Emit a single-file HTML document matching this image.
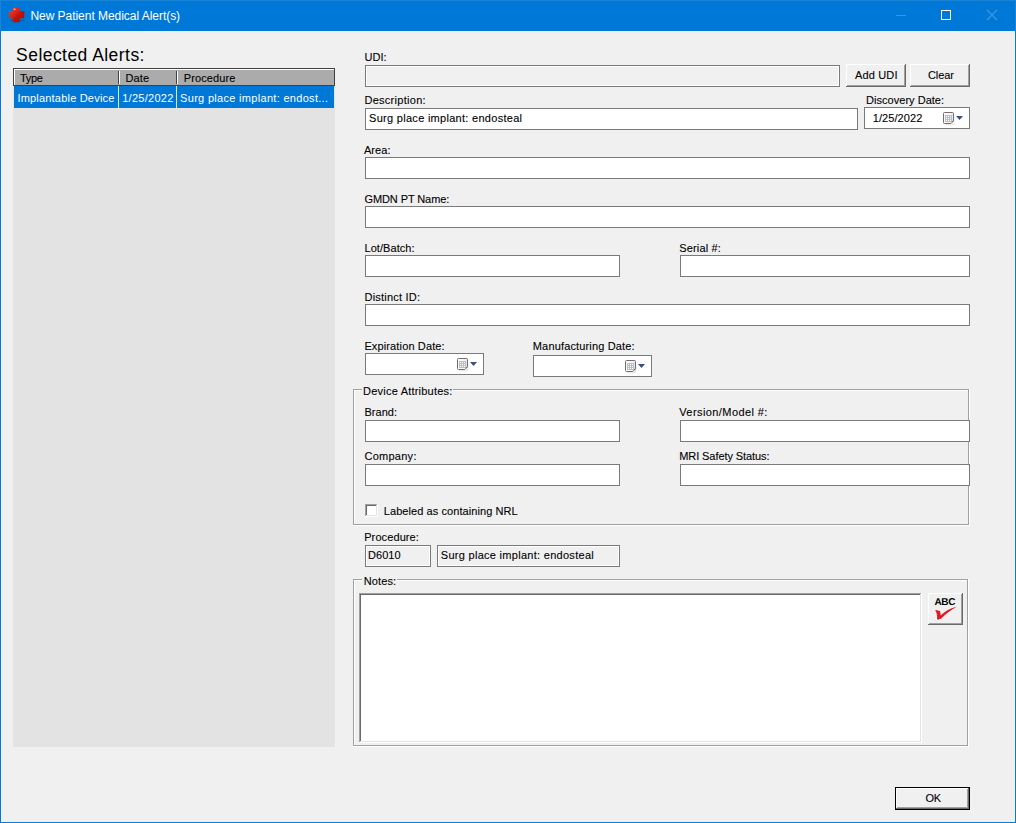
<!DOCTYPE html>
<html><head><meta charset="utf-8"><title>New Patient Medical Alert(s)</title>
<style>
html,body{margin:0;padding:0;}
body{width:1016px;height:823px;overflow:hidden;background:#f0f0f0;position:relative;font-family:"Liberation Sans",sans-serif;}
div,span,svg{position:absolute;box-sizing:border-box;}
.t{white-space:pre;}
.inp{background:#fff;border:1px solid #7a7a7a;}
.dis{background:#f0f0f0;border:1px solid #7a7a7a;box-shadow:inset 0 0 0 1px #fff;}
#win{left:0;top:0;width:1016px;height:823px;border:1px solid #0a7ad7;border-left-color:#0078d7;border-top:none;}
#tb{left:0;top:0;width:1016px;height:31px;background:#0078d7;}
#panel{left:13px;top:68px;width:322px;height:679px;background:#e3e3e3;}
#hdr{left:13px;top:68px;width:322px;height:18px;background:#ababab;border:1px solid #404040;box-shadow:inset 1px 1px 0 0 #fff;}
#row{left:14px;top:86px;width:320px;height:22px;background:#0078d7;}
</style></head><body>
<div id="win"></div>
<div id="tb"></div>
<div class="ln" style="left:0;top:0;width:1016px;height:1px;background:#1883d7"></div>
<div class="ln" style="left:0;top:0;width:1px;height:31px;background:#1883d7"></div>
<div class="ln" style="left:1015px;top:0;width:1px;height:31px;background:#1883d7"></div>

<svg style="left:8px;top:6px" width="18" height="18" viewBox="0 0 18 18">
<defs><linearGradient id="rg" x1="0" y1="0" x2="1" y2="1"><stop offset="0" stop-color="#ee4434"/><stop offset="0.45" stop-color="#d62012"/><stop offset="0.55" stop-color="#c81208"/><stop offset="1" stop-color="#a80600"/></linearGradient></defs>
<ellipse cx="9.2" cy="14.5" rx="7.4" ry="0.9" fill="#1a3a5c" opacity="0.45"/>
<path d="M5.55 1.6H11.0a0.8 0.8 0 0 1 0.8 0.8V5.1H15.5a0.8 0.8 0 0 1 0.8 0.8V11.399999999999999a0.8 0.8 0 0 1 -0.8 0.8H11.8V15.399999999999999a0.8 0.8 0 0 1 -0.8 0.8H5.55a0.8 0.8 0 0 1 -0.8 -0.8V12.2H1.8a0.8 0.8 0 0 1 -0.8 -0.8V5.8999999999999995a0.8 0.8 0 0 1 0.8 -0.8H4.75V2.4000000000000004a0.8 0.8 0 0 1 0.8 -0.8z" fill="url(#rg)"/>
<ellipse cx="6.6" cy="3.2" rx="1.1" ry="0.8" fill="#ffd8d0" opacity="0.8"/>
</svg>
<div class="ln" style="left:896px;top:15px;width:10px;height:1px;background:#3995e1"></div>
<div class="ln" style="left:941px;top:10px;width:10px;height:10px;border:1px solid #fff"></div>
<svg style="left:986px;top:9px" width="12" height="12" viewBox="0 0 12 12"><path d="M1 1l10 10M11 1l-10 10" stroke="#3f98e2" stroke-width="1.1" fill="none"/></svg>
<div id="panel"></div><div id="hdr"></div><div id="row"></div>
<div class="ln" style="left:118px;top:71px;width:1px;height:13px;background:#404040"></div>
<div class="ln" style="left:119px;top:71px;width:1px;height:13px;background:#fff"></div>
<div class="ln" style="left:118px;top:86px;width:1px;height:22px;background:#d9e6f2"></div>
<div class="ln" style="left:176px;top:71px;width:1px;height:13px;background:#404040"></div>
<div class="ln" style="left:177px;top:71px;width:1px;height:13px;background:#fff"></div>
<div class="ln" style="left:176px;top:86px;width:1px;height:22px;background:#d9e6f2"></div>
<div class="dis" style="left:365px;top:65px;width:475px;height:22px;"></div>
<div class="inp" style="left:365px;top:108px;width:493px;height:22px;"></div>
<div class="inp" style="left:864px;top:107px;width:106px;height:22px;"></div><svg class="cal" style="left:943px;top:112px" width="13" height="14" viewBox="0 0 13 14">
<defs><linearGradient id="cg1" x1="0" y1="0" x2="1" y2="0"><stop offset="0" stop-color="#fbfcfe"/><stop offset="0.7" stop-color="#f3f6fb"/><stop offset="1" stop-color="#d3e0f4"/></linearGradient></defs>
<rect x="1.5" y="3.4" width="10" height="10.2" rx="2" fill="#000" opacity="0.08"/>
<path d="M1.5 0.5h8a1 1 0 0 1 1 1v7.3l-2.7 2.7h-6.3a1 1 0 0 1-1-1v-9a1 1 0 0 1 1-1z" fill="url(#cg1)" stroke="#786a68" stroke-width="1"/>
<path d="M8 11.2l0.4-1.9 2.1-0.5z" fill="#e6ecf6"/>
<path d="M8.2 10.2L10.5 8.9" fill="none" stroke="#5f5351" stroke-width="0.9"/>
<rect x="2" y="3" width="7" height="7" fill="#b9bdc6"/>
<g fill="#fff"><rect x="3" y="4" width="1" height="1"/><rect x="5" y="4" width="1" height="1"/><rect x="7" y="4" width="1" height="1"/>
<rect x="3" y="6" width="1" height="1"/><rect x="5" y="6" width="1" height="1"/><rect x="7" y="6" width="1" height="1"/>
<rect x="3" y="8" width="1" height="1"/><rect x="5" y="8" width="1" height="1"/><rect x="7" y="8" width="1" height="1"/></g>
</svg>
<svg class="cal" style="left:956px;top:116px" width="7" height="4" viewBox="0 0 7 4"><path d="M0 0h7l-3.5 4z" fill="#3c517f"/></svg>
<div class="inp" style="left:365px;top:157px;width:605px;height:22px;"></div>
<div class="inp" style="left:365px;top:206px;width:605px;height:22px;"></div>
<div class="inp" style="left:365px;top:255px;width:255px;height:22px;"></div>
<div class="inp" style="left:680px;top:255px;width:290px;height:22px;"></div>
<div class="inp" style="left:365px;top:304px;width:605px;height:22px;"></div>
<div class="inp" style="left:365px;top:353px;width:119px;height:22px;"></div><svg class="cal" style="left:457px;top:358px" width="13" height="14" viewBox="0 0 13 14">
<defs><linearGradient id="cg2" x1="0" y1="0" x2="1" y2="0"><stop offset="0" stop-color="#fbfcfe"/><stop offset="0.7" stop-color="#f3f6fb"/><stop offset="1" stop-color="#d3e0f4"/></linearGradient></defs>
<rect x="1.5" y="3.4" width="10" height="10.2" rx="2" fill="#000" opacity="0.08"/>
<path d="M1.5 0.5h8a1 1 0 0 1 1 1v7.3l-2.7 2.7h-6.3a1 1 0 0 1-1-1v-9a1 1 0 0 1 1-1z" fill="url(#cg2)" stroke="#786a68" stroke-width="1"/>
<path d="M8 11.2l0.4-1.9 2.1-0.5z" fill="#e6ecf6"/>
<path d="M8.2 10.2L10.5 8.9" fill="none" stroke="#5f5351" stroke-width="0.9"/>
<rect x="2" y="3" width="7" height="7" fill="#b9bdc6"/>
<g fill="#fff"><rect x="3" y="4" width="1" height="1"/><rect x="5" y="4" width="1" height="1"/><rect x="7" y="4" width="1" height="1"/>
<rect x="3" y="6" width="1" height="1"/><rect x="5" y="6" width="1" height="1"/><rect x="7" y="6" width="1" height="1"/>
<rect x="3" y="8" width="1" height="1"/><rect x="5" y="8" width="1" height="1"/><rect x="7" y="8" width="1" height="1"/></g>
</svg>
<svg class="cal" style="left:470px;top:362px" width="7" height="4" viewBox="0 0 7 4"><path d="M0 0h7l-3.5 4z" fill="#3c517f"/></svg>
<div class="inp" style="left:533px;top:355px;width:119px;height:22px;"></div><svg class="cal" style="left:625px;top:360px" width="13" height="14" viewBox="0 0 13 14">
<defs><linearGradient id="cg3" x1="0" y1="0" x2="1" y2="0"><stop offset="0" stop-color="#fbfcfe"/><stop offset="0.7" stop-color="#f3f6fb"/><stop offset="1" stop-color="#d3e0f4"/></linearGradient></defs>
<rect x="1.5" y="3.4" width="10" height="10.2" rx="2" fill="#000" opacity="0.08"/>
<path d="M1.5 0.5h8a1 1 0 0 1 1 1v7.3l-2.7 2.7h-6.3a1 1 0 0 1-1-1v-9a1 1 0 0 1 1-1z" fill="url(#cg3)" stroke="#786a68" stroke-width="1"/>
<path d="M8 11.2l0.4-1.9 2.1-0.5z" fill="#e6ecf6"/>
<path d="M8.2 10.2L10.5 8.9" fill="none" stroke="#5f5351" stroke-width="0.9"/>
<rect x="2" y="3" width="7" height="7" fill="#b9bdc6"/>
<g fill="#fff"><rect x="3" y="4" width="1" height="1"/><rect x="5" y="4" width="1" height="1"/><rect x="7" y="4" width="1" height="1"/>
<rect x="3" y="6" width="1" height="1"/><rect x="5" y="6" width="1" height="1"/><rect x="7" y="6" width="1" height="1"/>
<rect x="3" y="8" width="1" height="1"/><rect x="5" y="8" width="1" height="1"/><rect x="7" y="8" width="1" height="1"/></g>
</svg>
<svg class="cal" style="left:638px;top:364px" width="7" height="4" viewBox="0 0 7 4"><path d="M0 0h7l-3.5 4z" fill="#3c517f"/></svg>
<div class="ln" style="left:353px;top:389px;width:9px;height:1px;background:#a0a0a0"></div><div class="ln" style="left:354px;top:390px;width:8px;height:1px;background:#fff"></div><div class="ln" style="left:453px;top:389px;width:516px;height:1px;background:#a0a0a0"></div><div class="ln" style="left:453px;top:390px;width:515px;height:1px;background:#fff"></div><div class="ln" style="left:353px;top:389px;width:1px;height:136px;background:#a0a0a0"></div><div class="ln" style="left:354px;top:390px;width:1px;height:134px;background:#fff"></div><div class="ln" style="left:968px;top:389px;width:1px;height:136px;background:#a0a0a0"></div><div class="ln" style="left:969px;top:389px;width:1px;height:137px;background:#fff"></div><div class="ln" style="left:353px;top:524px;width:616px;height:1px;background:#a0a0a0"></div><div class="ln" style="left:353px;top:525px;width:617px;height:1px;background:#fff"></div>
<div class="inp" style="left:365px;top:420px;width:255px;height:22px;"></div>
<div class="inp" style="left:680px;top:420px;width:290px;height:22px;"></div>
<div class="inp" style="left:365px;top:464px;width:255px;height:22px;"></div>
<div class="inp" style="left:680px;top:464px;width:290px;height:22px;"></div>
<div class="ln" style="left:365px;top:504px;width:13px;height:13px;background:#fff"></div>
<div class="ln" style="left:365px;top:504px;width:12px;height:12px;background:#a0a0a0"></div>
<div class="ln" style="left:366px;top:505px;width:11px;height:11px;background:#e3e3e3"></div>
<div class="ln" style="left:366px;top:505px;width:10px;height:10px;background:#696969"></div>
<div class="ln" style="left:367px;top:506px;width:9px;height:9px;background:#fff"></div>
<div class="dis" style="left:365px;top:545px;width:66px;height:22px;"></div>
<div class="dis" style="left:437px;top:545px;width:183px;height:22px;"></div>
<div class="ln" style="left:353px;top:579px;width:9px;height:1px;background:#a0a0a0"></div><div class="ln" style="left:354px;top:580px;width:8px;height:1px;background:#fff"></div><div class="ln" style="left:397px;top:579px;width:571px;height:1px;background:#a0a0a0"></div><div class="ln" style="left:397px;top:580px;width:570px;height:1px;background:#fff"></div><div class="ln" style="left:353px;top:579px;width:1px;height:167px;background:#a0a0a0"></div><div class="ln" style="left:354px;top:580px;width:1px;height:165px;background:#fff"></div><div class="ln" style="left:967px;top:579px;width:1px;height:167px;background:#a0a0a0"></div><div class="ln" style="left:968px;top:579px;width:1px;height:168px;background:#fff"></div><div class="ln" style="left:353px;top:745px;width:615px;height:1px;background:#a0a0a0"></div><div class="ln" style="left:353px;top:746px;width:616px;height:1px;background:#fff"></div>
<div class="ln" style="left:359px;top:593px;width:563px;height:150px;background:#fff"></div>
<div class="ln" style="left:359px;top:593px;width:562px;height:149px;background:#a0a0a0"></div>
<div class="ln" style="left:360px;top:594px;width:561px;height:148px;background:#e3e3e3"></div>
<div class="ln" style="left:360px;top:594px;width:560px;height:147px;background:#696969"></div>
<div class="ln" style="left:361px;top:595px;width:559px;height:146px;background:#fff"></div>
<div class="ln" style="left:846px;top:64px;width:60px;height:23px;background:#696969"></div><div class="ln" style="left:846px;top:64px;width:59px;height:22px;background:#fff"></div><div class="ln" style="left:847px;top:65px;width:58px;height:21px;background:#a0a0a0"></div><div class="ln" style="left:847px;top:65px;width:57px;height:20px;background:#f0f0f0"></div>
<div class="ln" style="left:910px;top:64px;width:60px;height:23px;background:#696969"></div><div class="ln" style="left:910px;top:64px;width:59px;height:22px;background:#fff"></div><div class="ln" style="left:911px;top:65px;width:58px;height:21px;background:#a0a0a0"></div><div class="ln" style="left:911px;top:65px;width:57px;height:20px;background:#f0f0f0"></div>
<div class="ln" style="left:928px;top:593px;width:35px;height:32px;background:#696969"></div><div class="ln" style="left:928px;top:593px;width:34px;height:31px;background:#fff"></div><div class="ln" style="left:929px;top:594px;width:33px;height:30px;background:#a0a0a0"></div><div class="ln" style="left:929px;top:594px;width:32px;height:29px;background:#f0f0f0"></div>
<div class="ln" style="left:895px;top:787px;width:75px;height:23px;background:#000"></div><div class="ln" style="left:896px;top:788px;width:73px;height:21px;background:#696969"></div><div class="ln" style="left:896px;top:788px;width:72px;height:20px;background:#fff"></div><div class="ln" style="left:897px;top:789px;width:71px;height:19px;background:#a0a0a0"></div><div class="ln" style="left:897px;top:789px;width:70px;height:18px;background:#f0f0f0"></div>
<svg style="left:934px;top:605px" width="25" height="16" viewBox="0 0 25 16">
<path d="M1.7 5.1 L6.0 6.0 C6.3 7.6 6.5 9.0 6.9 10.4 C10.5 6.6 15.5 3.5 22.9 1.7 C17 4.6 11 9.2 7.0 13.8 L3.6 14.2 C3.8 11 3.2 7.8 1.7 5.1Z" fill="#e9141d"/>
<path d="M1.7 5.1 C3.2 7.8 3.8 11 3.6 14.2 L5 13.9" fill="none" stroke="#a80c14" stroke-width="0.7"/>
</svg>
<span class="t" id="title" style="left:30.40px;top:7.84px;font-size:12px;line-height:16px;color:#fff;letter-spacing:-0.037px;">New Patient Medical Alert(s)</span>
<span class="t" id="sel" style="left:16.10px;top:43.64px;font-size:17.5px;line-height:23px;color:#000;letter-spacing:0.450px;">Selected Alerts:</span>
<span class="t" id="hType" style="left:19.90px;top:71.19px;font-size:11px;line-height:14px;color:#000;letter-spacing:-0.270px;-webkit-text-stroke:0.1px #000;">Type</span>
<span class="t" id="hDate" style="left:125.50px;top:71.19px;font-size:11px;line-height:14px;color:#000;letter-spacing:0.100px;-webkit-text-stroke:0.1px #000;">Date</span>
<span class="t" id="hProc" style="left:183.80px;top:71.19px;font-size:11px;line-height:14px;color:#000;letter-spacing:0.089px;-webkit-text-stroke:0.1px #000;">Procedure</span>
<span class="t" id="rType" style="left:17.40px;top:90.79px;font-size:11px;line-height:14px;color:#fff;letter-spacing:0.200px;">Implantable Device</span>
<span class="t" id="rDate" style="left:122.20px;top:90.79px;font-size:11px;line-height:14px;color:#fff;letter-spacing:0.275px;">1/25/2022</span>
<span class="t" id="rProc" style="left:180.10px;top:90.79px;font-size:11px;line-height:14px;color:#fff;letter-spacing:0.304px;">Surg place implant: endost...</span>
<span class="t" id="udi" style="left:364.40px;top:50.19px;font-size:11px;line-height:14px;color:#000;letter-spacing:0.067px;-webkit-text-stroke:0.1px #000;">UDI:</span>
<span class="t" id="desc" style="left:364.40px;top:93.19px;font-size:11px;line-height:14px;color:#000;letter-spacing:0.291px;-webkit-text-stroke:0.1px #000;">Description:</span>
<span class="t" id="descv" style="left:369.10px;top:110.69px;font-size:11px;line-height:14px;color:#000;letter-spacing:0.286px;-webkit-text-stroke:0.1px #000;">Surg place implant: endosteal</span>
<span class="t" id="disc" style="left:866.10px;top:92.69px;font-size:11px;line-height:14px;color:#000;letter-spacing:0.023px;-webkit-text-stroke:0.1px #000;">Discovery Date:</span>
<span class="t" id="discv" style="left:872.70px;top:110.69px;font-size:11px;line-height:14px;color:#000;letter-spacing:0.080px;-webkit-text-stroke:0.1px #000;">1/25/2022</span>
<span class="t" id="area" style="left:363.90px;top:142.89px;font-size:11px;line-height:14px;color:#000;letter-spacing:0.100px;-webkit-text-stroke:0.1px #000;">Area:</span>
<span class="t" id="gmdn" style="left:364.50px;top:191.99px;font-size:11px;line-height:14px;color:#000;letter-spacing:-0.100px;-webkit-text-stroke:0.1px #000;">GMDN PT Name:</span>
<span class="t" id="lot" style="left:364.50px;top:241.19px;font-size:11px;line-height:14px;color:#000;letter-spacing:0.055px;-webkit-text-stroke:0.1px #000;">Lot/Batch:</span>
<span class="t" id="serial" style="left:679.20px;top:241.19px;font-size:11px;line-height:14px;color:#000;letter-spacing:0.162px;-webkit-text-stroke:0.1px #000;">Serial #:</span>
<span class="t" id="dist" style="left:364.50px;top:289.89px;font-size:11px;line-height:14px;color:#000;letter-spacing:0.218px;-webkit-text-stroke:0.1px #000;">Distinct ID:</span>
<span class="t" id="exp" style="left:364.40px;top:338.99px;font-size:11px;line-height:14px;color:#000;letter-spacing:0.134px;-webkit-text-stroke:0.1px #000;">Expiration Date:</span>
<span class="t" id="manu" style="left:532.80px;top:339.19px;font-size:11px;line-height:14px;color:#000;letter-spacing:0.155px;-webkit-text-stroke:0.1px #000;">Manufacturing Date:</span>
<span class="t" id="dev" style="left:363.10px;top:383.99px;font-size:11px;line-height:14px;color:#000;letter-spacing:0.212px;-webkit-text-stroke:0.1px #000;">Device Attributes:</span>
<span class="t" id="brand" style="left:364.50px;top:404.99px;font-size:11px;line-height:14px;color:#000;letter-spacing:0.020px;-webkit-text-stroke:0.1px #000;">Brand:</span>
<span class="t" id="ver" style="left:679.20px;top:405.09px;font-size:11px;line-height:14px;color:#000;letter-spacing:0.420px;-webkit-text-stroke:0.1px #000;">Version/Model #:</span>
<span class="t" id="comp" style="left:364.50px;top:449.19px;font-size:11px;line-height:14px;color:#000;letter-spacing:0.257px;-webkit-text-stroke:0.1px #000;">Company:</span>
<span class="t" id="mri" style="left:679.20px;top:449.49px;font-size:11px;line-height:14px;color:#000;letter-spacing:-0.077px;-webkit-text-stroke:0.1px #000;">MRI Safety Status:</span>
<span class="t" id="nrl" style="left:383.80px;top:504.09px;font-size:11px;line-height:14px;color:#000;letter-spacing:0.074px;-webkit-text-stroke:0.1px #000;">Labeled as containing NRL</span>
<span class="t" id="proc" style="left:364.20px;top:529.99px;font-size:11px;line-height:14px;color:#000;letter-spacing:0.100px;-webkit-text-stroke:0.1px #000;">Procedure:</span>
<span class="t" id="d6010" style="left:368.10px;top:548.09px;font-size:11px;line-height:14px;color:#000;letter-spacing:0.000px;-webkit-text-stroke:0.1px #000;">D6010</span>
<span class="t" id="procv" style="left:440.80px;top:548.09px;font-size:11px;line-height:14px;color:#000;letter-spacing:0.286px;-webkit-text-stroke:0.1px #000;">Surg place implant: endosteal</span>
<span class="t" id="notes" style="left:363.80px;top:574.19px;font-size:11px;line-height:14px;color:#000;letter-spacing:0.100px;-webkit-text-stroke:0.1px #000;">Notes:</span>
<span class="t" id="addudi" style="left:854.90px;top:67.99px;font-size:11px;line-height:14px;color:#000;letter-spacing:0.167px;-webkit-text-stroke:0.1px #000;">Add UDI</span>
<span class="t" id="clear" style="left:927.90px;top:67.99px;font-size:11px;line-height:14px;color:#000;letter-spacing:-0.050px;-webkit-text-stroke:0.1px #000;">Clear</span>
<span class="t" id="ok" style="left:925.50px;top:791.09px;font-size:11px;line-height:14px;color:#000;letter-spacing:-0.400px;-webkit-text-stroke:0.1px #000;">OK</span>
<span class="t" id="abc" style="left:934.60px;top:596.43px;font-size:10px;line-height:13px;color:#000;letter-spacing:-0.450px;font-weight:bold;text-rendering:geometricPrecision;">ABC</span>
</body></html>
